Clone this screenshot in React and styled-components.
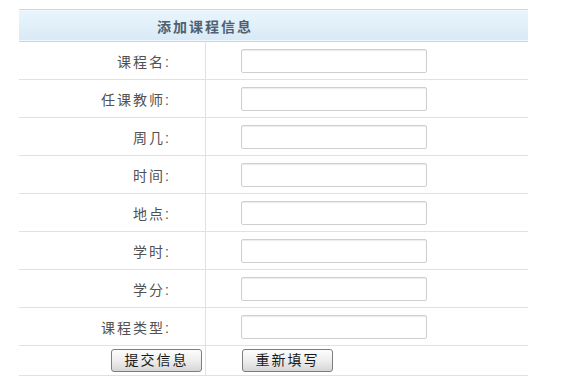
import styled, { createGlobalStyle } from 'styled-components';

const GlobalStyle = createGlobalStyle`
  body {
    margin: 0;
    background: #fff;
    font-family: "Liberation Sans", "Noto Sans CJK SC", sans-serif;
  }
`;

const Form = styled.form`
  margin: 9px 0 0 19px;
  width: 509px;
`;

const Header = styled.div`
  height: 31px;
  border-top: 1px solid #c4d9e4;
  border-bottom: 1px solid #c4d9e4;
  box-shadow: inset 0 1px 0 #f3faff, inset 0 -1px 0 #eef7fd;
  background: linear-gradient(#e9f5fd, #d8eaf6);
  display: flex;
  align-items: center;
  padding-left: 138px;
  font-size: 14px;
  font-weight: bold;
  letter-spacing: 2px;
  color: #4f6071;
`;

const Row = styled.div`
  display: grid;
  grid-template-columns: 187px 1fr;
  height: ${(p) => (p.$short ? '29px' : '37px')};
  border-bottom: 1px solid #d6e4ec;
`;

const LabelCell = styled.div`
  display: flex;
  align-items: center;
  justify-content: flex-end;
  border-right: 1px solid #d6e4ec;
  padding-right: ${(p) => (p.$tight ? '3px' : '34px')};
  font-size: 14px;
  letter-spacing: 2px;
  color: #525252;
`;

const FieldCell = styled.div`
  display: flex;
  align-items: center;
  padding-left: ${(p) => (p.$tight ? '36px' : '35px')};
`;

const TextInput = styled.input`
  box-sizing: border-box;
  width: 186px;
  height: 24px;
  border: 1px solid #cfcfcf;
  border-radius: 2px;
  box-shadow: inset 0 1px 1px #ececec;
  background: #fff;
  outline: none;
`;

const Button = styled.button`
  box-sizing: border-box;
  width: 91px;
  height: 23px;
  padding: 0;
  border: 1px solid #7e7e7e;
  border-radius: 3px;
  background: linear-gradient(#fdfdfd, #ececec 55%, #d6d6d6);
  font-family: "Liberation Sans", "Noto Sans CJK SC", sans-serif;
  font-size: 14px;
  letter-spacing: 2px;
  color: #1a1a1a;
  line-height: 21px;
`;

const fields = ['课程名', '任课教师', '周几', '时间', '地点', '学时', '学分', '课程类型'];

export default function App() {
  return (
    <>
      <GlobalStyle />
      <Form onSubmit={(e) => e.preventDefault()}>
        <Header>添加课程信息</Header>
        {fields.map((f) => (
          <Row key={f}>
            <LabelCell>{f}:</LabelCell>
            <FieldCell>
              <TextInput type="text" />
            </FieldCell>
          </Row>
        ))}
        <Row $short>
          <LabelCell $tight>
            <Button type="submit">提交信息</Button>
          </LabelCell>
          <FieldCell $tight>
            <Button type="reset">重新填写</Button>
          </FieldCell>
        </Row>
      </Form>
    </>
  );
}
